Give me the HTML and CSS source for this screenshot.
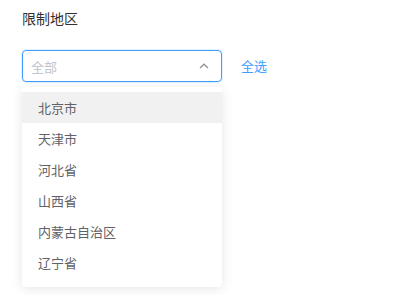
FILE: index.html
```html
<!DOCTYPE html>
<html lang="zh-CN">
  <head>
    <meta charset="UTF-8" />
    <meta name="viewport" content="width=device-width, initial-scale=1.0" />
    <title>限制地区</title>
    <link rel="stylesheet" href="styles.css">
  </head>
  <body>
    <div class="page">
      <div class="label">限制地区</div>
      <div class="row">
        <div class="field">
          <div class="select">
            <span class="placeholder">全部</span>
            <svg class="arrow" width="10" height="6" viewBox="0 0 10 6">
              <path d="M1 5 L5 1.2 L9 5" fill="none" stroke="#909399" stroke-width="1.3" />
            </svg>
          </div>
          <ul class="dropdown">
            <li class="item hover">北京市</li>
            <li class="item">天津市</li>
            <li class="item">河北省</li>
            <li class="item">山西省</li>
            <li class="item">内蒙古自治区</li>
            <li class="item">辽宁省</li>
          </ul>
        </div>
        <a class="all">全选</a>
      </div>
    </div>
  </body>
</html>
```

FILE: styles.css
```css
body {
  margin: 0;
  background: #fff;
  font-family: "Noto Sans CJK SC", "Noto Sans", sans-serif;
}

.page {
  padding: 8px 22px;
}

.label {
  font-size: 14px;
  line-height: 20px;
  color: #303133;
  margin-bottom: 22px;
}

.row {
  display: flex;
  align-items: flex-start;
  gap: 19px;
}

.field {
  width: 200px;
}

.select {
  box-sizing: border-box;
  height: 32px;
  border: 1px solid #409eff;
  border-radius: 4px;
  box-shadow: 0 0 0 1px rgba(64, 158, 255, 0.15);
  display: flex;
  align-items: center;
  justify-content: space-between;
  padding: 0 12px 0 8px;
}

.placeholder {
  font-size: 13px;
  color: #c0c4cc;
}

.arrow {
  display: block;
}

.dropdown {
  list-style: none;
  margin: 5px 0 0;
  padding: 5px 0 9px;
  border-radius: 4px;
  background: #fff;
  box-shadow: 0 2px 12px 0 rgba(0, 0, 0, 0.1);
}

.item {
  height: 31px;
  line-height: 31px;
  padding: 0 16px;
  font-size: 13px;
  color: #606266;
}

.item.hover {
  background: #f1f1f1;
}

.all {
  font-size: 13px;
  line-height: 32px;
  color: #409eff;
  cursor: pointer;
}
```
